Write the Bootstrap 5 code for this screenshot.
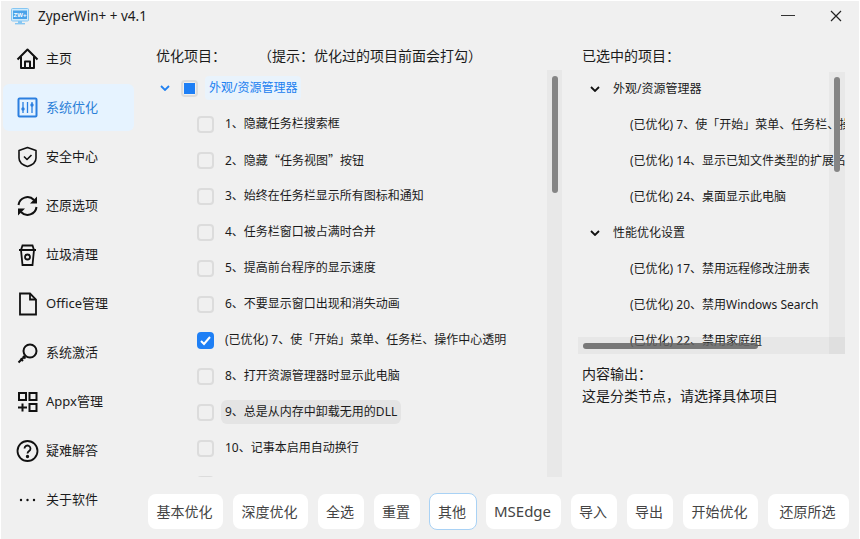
<!DOCTYPE html>
<html lang="zh-CN">
<head>
<meta charset="utf-8">
<title>ZyperWin++</title>
<link href="https://cdn.jsdelivr.net/npm/bootstrap@5.3.0/dist/css/bootstrap.min.css" rel="stylesheet">
<style>
html,body{height:100%;margin:0;background:#fff;overflow:hidden}
body{font-family:"Noto Sans","Noto Sans CJK SC",sans-serif;font-size:13px;color:#1b1b1b}
.app-win{width:858px;height:538px;margin:1px 0 0 1px;background:#f0f0f0}
.title-bar{height:30px;padding-left:10px}
.app-title{margin-left:9px;font-size:13.500px;line-height:30px}
.win-ctl{width:50px;height:30px}
.win-ctl.end{width:46px}
.body-wrap{height:508px}
.side-col{width:146px;flex:none;padding-top:3px}
.side-item{height:49px;margin:0 13px 0 2px;padding-left:13px;gap:6px;border-radius:6px;line-height:1}
.side-item.is-on{background:#e6f3ff;color:#2b7fd8;height:47px;margin-top:1px;margin-bottom:1px}
.side-ico{width:24px;height:24px;flex:none}
.work-col{width:712px;flex:none}
.work-row{height:463px}
.left-pane{width:415px;flex:none;padding-top:15px}
.pane-head{font-size:14px;line-height:20px;margin-left:9px}
.hint-gap{margin-left:39px}
.tree-box{position:relative;height:407px;margin-top:4px;overflow:hidden}
.tree-row{height:36px;font-size:12px;white-space:nowrap}
.tree-top{padding-left:13px}
.chev{width:10px;height:6px;flex:none}
.cbx{width:17px;height:17px;border:2px solid #dcdcdc;border-radius:4px;background:#f0f0f0;flex:none}
.cbx.part{margin-left:11px;display:flex;align-items:center;justify-content:center}
.cbx.part i{display:block;width:11px;height:11px;background:#1e7ff5}
.cbx.chk{background:#1e7ff5;border-color:#1e7ff5}
.tree-sub{padding-left:50px}
.row-txt{margin-left:7px;padding:0 4px;height:24px;line-height:24px;border-radius:6px}
.row-txt.sel{color:#2080f0;background:#e9f3fc;border-radius:4px}
.row-txt.hov{background:#e4e4e4}
.cjk-q{font-family:"Noto Sans CJK SC",sans-serif}
.bar-v{position:absolute;top:0;bottom:0;width:15px;background:rgba(0,0,0,.03)}
.bar-left{left:400px}
.thumb-v{position:absolute;left:5px;width:6px;background:#858585;border-radius:3px}
.thumb-a{top:6px;height:117px}
.thumb-b{top:5px;height:95px}
.right-pane{width:267px;flex:none;margin-left:16px;padding-top:15px}
.right-pane .pane-head{margin-left:4px}
.tree-box2{position:relative;height:282px;margin-top:6px;overflow:hidden}
.r-row{height:36px;font-size:12px;white-space:nowrap}
.r-row:first-child{margin-top:-1px}
.r-top{padding-left:12px;gap:13px}
.r-sub{padding-left:52px}
.bar-right{right:0;width:16px}
.bar-h{position:absolute;left:0;right:0;bottom:0;height:17px;background:rgba(0,0,0,.035)}
.thumb-h{position:absolute;left:5px;top:6px;width:175px;height:6px;background:rgba(100,100,100,.85);border-radius:3px}
.out-box{font-size:14px;line-height:22px;margin-top:9px;margin-left:4px}
.act-bar{margin-left:1px;gap:10px;height:35px;align-items:center}
.act-btn{height:35px;width:46px;padding:0 2px 0 0;border:0;background:#fff;border-radius:8px;color:#444;font-size:14px;white-space:nowrap;flex:none}
.act-btn.wide{width:75px}
.act-btn.last{width:81px}
.act-btn.on{width:48px;height:37px;margin:0 -1px;border:1px solid #a9d2f5}
.act-btn.lat{font-size:15px}
</style>
</head>
<body>
<div class="app-win">
  <div class="title-bar d-flex align-items-center">
    <svg width="18" height="17" viewBox="0 0 18 17"><rect x=".5" y=".5" width="17" height="12.500" rx="1" fill="#cdeafc" stroke="#86c6f2"/><rect x="7" y="13" width="4" height="2" fill="#86c6f2"/><rect x="4" y="15" width="10" height="1.400" fill="#86c6f2"/><rect x="2" y="2.500" width="14" height="8.500" fill="#4aa3ea"/><text x="9" y="9" text-anchor="middle" font-size="6" font-weight="700" font-family="Liberation Sans" fill="#fff">ZW+</text></svg>
    <span class="app-title">ZyperWin+ + v4.1</span>
    <div class="ms-auto d-flex">
      <div class="win-ctl d-flex align-items-center justify-content-center"><svg width="14" height="2"><rect width="14" height="1" fill="#333"/></svg></div>
      <div class="win-ctl end d-flex align-items-center justify-content-center"><svg width="12" height="12" viewBox="0 0 12 12"><path d="M1 1l10 10M11 1L1 11" stroke="#222" stroke-width="1.200" fill="none"/></svg></div>
    </div>
  </div>
  <div class="body-wrap d-flex">
    <nav class="side-col d-flex flex-column">
      <div class="side-item d-flex align-items-center"><svg class="side-ico" viewBox="0 0 24 24" fill="none" stroke="#111" stroke-width="2" stroke-linejoin="round"><path d="M1.500 12.500 11.500 2.500l10 10"/><path d="M5 9.500V21h13V9.500"/><path d="M9 21v-6.500h5V21"/></svg><span>主页</span></div>
      <div class="side-item is-on d-flex align-items-center"><svg class="side-ico" viewBox="0 0 24 24" fill="none" stroke="#2b7fe0" stroke-width="2"><rect x="2.500" y="2.500" width="18" height="18" rx="1"/><path d="M7 6v11M11.500 6v11M16 6v11" stroke-width="1.300"/><circle cx="7" cy="13" r="1.700" fill="#2b7fe0" stroke="none"/><circle cx="16" cy="9" r="1.700" fill="#2b7fe0" stroke="none"/></svg><span>系统优化</span></div>
      <div class="side-item d-flex align-items-center"><svg class="side-ico" viewBox="0 0 24 24" fill="none" stroke="#111" stroke-width="1.600" stroke-linejoin="round"><path d="M11.500 2.500 20 5.500v7.500c0 4-3.500 7-8.500 8.500C6.500 20 3 17 3 13V5.500z"/><path d="m8 11.500 3 3 4.500-4.500"/></svg><span>安全中心</span></div>
      <div class="side-item d-flex align-items-center"><svg class="side-ico" viewBox="0 0 24 24" fill="none" stroke="#111" stroke-width="2"><path d="M2.500 11a9 9 0 0 1 15.500-5"/><path d="M20.500 13a9 9 0 0 1-15.500 5"/><path d="M21 2.500V9.500h-7zM2 21.500V14.500h7z" fill="#111" stroke="none"/></svg><span>还原选项</span></div>
      <div class="side-item d-flex align-items-center"><svg class="side-ico" viewBox="0 0 24 24" fill="none" stroke="#111" stroke-width="1.800"><path d="M3 7h17M6.500 2.500h10L18 7H5zM5 7l1.500 15h10L18 7"/><circle cx="11.500" cy="14" r="2.500"/></svg><span>垃圾清理</span></div>
      <div class="side-item d-flex align-items-center"><svg class="side-ico" viewBox="0 0 24 24" fill="none" stroke="#111" stroke-width="1.800"><path d="M4 1.500h10l6 6v15H4z"/><path d="M14 1.500v6h6"/></svg><span>Office管理</span></div>
      <div class="side-item d-flex align-items-center"><svg class="side-ico" viewBox="0 0 24 24" fill="none" stroke="#111" stroke-width="2"><circle cx="14" cy="10" r="6.500"/><path d="m9 15-6.500 6.500M4.500 17.500l2.500 2.500M7 15l2.500 2.500"/></svg><span>系统激活</span></div>
      <div class="side-item d-flex align-items-center"><svg class="side-ico" viewBox="0 0 24 24" fill="none" stroke="#111" stroke-width="2"><rect x="3" y="3" width="7" height="7"/><rect x="13.500" y="3" width="7" height="7"/><rect x="13.500" y="14" width="7" height="7"/><path d="M6.500 13.500v8M2 17.500h9"/></svg><span>Appx管理</span></div>
      <div class="side-item d-flex align-items-center"><svg class="side-ico" viewBox="0 0 24 24" fill="none" stroke="#111" stroke-width="1.800"><circle cx="11.500" cy="12" r="10"/><path d="M8.500 9.500a3 3 0 1 1 4.500 2.600c-1 .6-1.500 1.200-1.500 2.400"/><circle cx="11.500" cy="17.500" r=".8" fill="#111"/></svg><span>疑难解答</span></div>
      <div class="side-item d-flex align-items-center"><svg class="side-ico" viewBox="0 0 24 24" fill="#111"><circle cx="5" cy="12" r="1.200"/><circle cx="11.500" cy="12" r="1.200"/><circle cx="18" cy="12" r="1.200"/></svg><span>关于软件</span></div>
    </nav>
    <div class="work-col">
      <div class="work-row d-flex">
        <section class="left-pane">
          <div class="pane-head">优化项目&#xFF1A;<span class="hint-gap">&#xFF08;提示&#xFF1A;优化过的项目前面会打勾&#xFF09;</span></div>
          <div class="tree-box">
            <div class="tree-row tree-top d-flex align-items-center"><svg class="chev" viewBox="0 0 10 6"><path d="M1 1l4 4 4-4" fill="none" stroke="#2080f0" stroke-width="1.800"/></svg><span class="cbx part"><i></i></span><span class="row-txt sel">外观/资源管理器</span></div>
            <div class="tree-row tree-sub d-flex align-items-center"><span class="cbx"></span><span class="row-txt">1、隐藏任务栏搜索框</span></div>
            <div class="tree-row tree-sub d-flex align-items-center"><span class="cbx"></span><span class="row-txt">2、隐藏<span class="cjk-q">“</span>任务视图<span class="cjk-q">”</span>按钮</span></div>
            <div class="tree-row tree-sub d-flex align-items-center"><span class="cbx"></span><span class="row-txt">3、始终在任务栏显示所有图标和通知</span></div>
            <div class="tree-row tree-sub d-flex align-items-center"><span class="cbx"></span><span class="row-txt">4、任务栏窗口被占满时合并</span></div>
            <div class="tree-row tree-sub d-flex align-items-center"><span class="cbx"></span><span class="row-txt">5、提高前台程序的显示速度</span></div>
            <div class="tree-row tree-sub d-flex align-items-center"><span class="cbx"></span><span class="row-txt">6、不要显示窗口出现和消失动画</span></div>
            <div class="tree-row tree-sub d-flex align-items-center"><span class="cbx chk"><svg class="d-block" width="13" height="13" viewBox="0 0 13 13"><path d="M2 7l3 3 6-7" fill="none" stroke="#fff" stroke-width="2"/></svg></span><span class="row-txt">(已优化) 7、使「开始」菜单、任务栏、操作中心透明</span></div>
            <div class="tree-row tree-sub d-flex align-items-center"><span class="cbx"></span><span class="row-txt">8、打开资源管理器时显示此电脑</span></div>
            <div class="tree-row tree-sub d-flex align-items-center"><span class="cbx"></span><span class="row-txt hov">9、总是从内存中卸载无用的DLL</span></div>
            <div class="tree-row tree-sub d-flex align-items-center"><span class="cbx"></span><span class="row-txt">10、记事本启用自动换行</span></div>
            <div class="tree-row tree-sub d-flex align-items-center"><span class="cbx"></span></div>
            <div class="bar-v bar-left"><div class="thumb-v thumb-a"></div></div>
          </div>
        </section>
        <section class="right-pane">
          <div class="pane-head">已选中的项目&#xFF1A;</div>
          <div class="tree-box2">
            <div class="r-row r-top d-flex align-items-center"><svg class="chev" viewBox="0 0 10 6"><path d="M1 1l4 4 4-4" fill="none" stroke="#111" stroke-width="1.800"/></svg><span>外观/资源管理器</span></div>
            <div class="r-row r-sub d-flex align-items-center"><span>(已优化) 7、使「开始」菜单、任务栏、操作中心透明</span></div>
            <div class="r-row r-sub d-flex align-items-center"><span>(已优化) 14、显示已知文件类型的扩展名</span></div>
            <div class="r-row r-sub d-flex align-items-center"><span>(已优化) 24、桌面显示此电脑</span></div>
            <div class="r-row r-top d-flex align-items-center"><svg class="chev" viewBox="0 0 10 6"><path d="M1 1l4 4 4-4" fill="none" stroke="#111" stroke-width="1.800"/></svg><span>性能优化设置</span></div>
            <div class="r-row r-sub d-flex align-items-center"><span>(已优化) 17、禁用远程修改注册表</span></div>
            <div class="r-row r-sub d-flex align-items-center"><span>(已优化) 20、禁用Windows Search</span></div>
            <div class="r-row r-sub d-flex align-items-center"><span>(已优化) 22、禁用家庭组</span></div>
            <div class="bar-v bar-right"><div class="thumb-v thumb-b"></div></div>
            <div class="bar-h"><div class="thumb-h"></div></div>
          </div>
          <div class="out-box">内容输出&#xFF1A;<br>这是分类节点&#xFF0C;请选择具体项目</div>
        </section>
      </div>
      <div class="act-bar d-flex">
        <button type="button" class="act-btn wide">基本优化</button>
        <button type="button" class="act-btn wide">深度优化</button>
        <button type="button" class="act-btn">全选</button>
        <button type="button" class="act-btn">重置</button>
        <button type="button" class="act-btn on">其他</button>
        <button type="button" class="act-btn wide lat">MSEdge</button>
        <button type="button" class="act-btn">导入</button>
        <button type="button" class="act-btn">导出</button>
        <button type="button" class="act-btn wide">开始优化</button>
        <button type="button" class="act-btn last">还原所选</button>
      </div>
    </div>
  </div>
</div>
<script src="https://cdn.jsdelivr.net/npm/bootstrap@5.3.0/dist/js/bootstrap.bundle.min.js"></script>
</body>
</html>
